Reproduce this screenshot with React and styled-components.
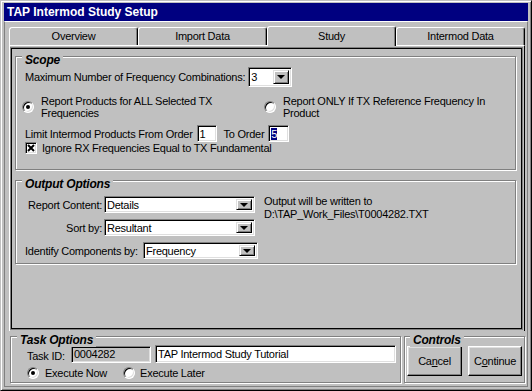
import React from 'react'
import styled, { createGlobalStyle } from 'styled-components'

const GlobalStyle = createGlobalStyle`
  html, body {
    margin: 0;
    padding: 0;
    background: #c0c0c0;
  }
  body {
    font-family: "Liberation Sans", Arial, sans-serif;
    font-size: 11px;
    letter-spacing: -0.25px;
    color: #000;
  }
`

const Window = styled.div`
  width: 532px;
  height: 391px;
  box-sizing: border-box;
  background: #c0c0c0;
  border: 1px solid;
  border-color: #c0c0c0 #000 #000 #c0c0c0;
  box-shadow: inset 1px 1px 0 #fff, inset -1px -1px 0 #808080;
  padding: 2px 3px 3px 3px;
  display: flex;
  flex-direction: column;
`

const TitleBar = styled.div`
  height: 18px;
  background: #000080;
  color: #fff;
  font-weight: bold;
  font-size: 12px;
  letter-spacing: 0;
  line-height: 18px;
  padding-left: 3px;
`

const Client = styled.div`
  flex: 1;
  display: flex;
  flex-direction: column;
  border: 1px solid #808080;
  border-top-color: #fff;
  padding: 4px 1px 1px 4px;
`

const TabStrip = styled.div`
  display: flex;
  align-items: flex-end;
  height: 19px;
  margin-right: 1px;
`

const Tab = styled.div`
  flex: 1;
  box-sizing: border-box;
  height: ${p => (p.$active ? 20 : 18)}px;
  margin-bottom: ${p => (p.$active ? -1 : 0)}px;
  background: #c0c0c0;
  border: 1px solid;
  border-bottom: none;
  border-color: #fff #000 transparent #fff;
  border-radius: 3px 3px 0 0;
  box-shadow: inset -1px 0 0 #808080;
  display: flex;
  align-items: center;
  justify-content: center;
  padding-bottom: ${p => (p.$active ? 2 : 1)}px;
  position: relative;
  z-index: ${p => (p.$active ? 1 : 0)};
`

const Panel = styled.div`
  height: 286px;
  box-sizing: border-box;
  margin-right: 1px;
  border-top: 1px solid #fff;
  border-left: 1px solid #fff;
  border-right: 1px solid #000;
  padding: 1px 1px 1px 0;
  display: flex;
`

const InnerFrame = styled.div`
  flex: 1;
  border: 1px solid #808080;
  box-shadow: inset 0 0 0 1px #000;
  padding: 8px 6px 0 4px;
  display: flex;
  flex-direction: column;
  gap: 10px;
`

const GroupBox = styled.div`
  position: relative;
  box-sizing: border-box;
  height: ${p => p.$height}px;
  border: 1px solid #808080;
  box-shadow: inset 1px 1px 0 #fff, 1px 1px 0 #fff;
  padding: ${p => p.$pad};
`

const GroupLabel = styled.div`
  position: absolute;
  top: -3px;
  left: ${p => p.$left || 6}px;
  padding: 0 3px;
  background: #c0c0c0;
  font-weight: bold;
  font-style: italic;
  font-size: 12px;
  line-height: 13px;
  letter-spacing: -0.2px;
`

const Row = styled.div`
  display: flex;
  align-items: center;
  gap: ${p => p.$gap || 0}px;
  margin-top: ${p => p.$mt || 0}px;
  margin-left: ${p => p.$ml || 0}px;
  height: ${p => (p.$h ? `${p.$h}px` : 'auto')};
`

const Field = styled.div`
  box-sizing: border-box;
  width: ${p => p.$w}px;
  height: ${p => p.$h}px;
  margin-left: ${p => p.$ml || 0}px;
  background: ${p => (p.$disabled ? '#c0c0c0' : '#fff')};
  border: 1px solid;
  border-color: #808080 #fff #fff #808080;
  box-shadow: inset 1px 1px 0 #000, inset -1px -1px 0 #dfdfdf;
  display: flex;
  align-items: center;
  padding-left: 2px;
  line-height: 12px;
  overflow: hidden;
  white-space: nowrap;
`

const SelectBox = styled(Field)`
  padding-right: 2px;
  justify-content: space-between;
`

const Highlight = styled.span`
  background: #000080;
  color: #fff;
`

const ArrowButton = styled.div`
  box-sizing: border-box;
  width: 16px;
  height: calc(100% - 4px);
  background: #c0c0c0;
  border: 1px solid;
  border-color: #dfdfdf #000 #000 #dfdfdf;
  box-shadow: inset 1px 1px 0 #fff, inset -1px -1px 0 #808080;
  display: flex;
  align-items: center;
  justify-content: center;
  &::after {
    content: '';
    border-left: 4px solid transparent;
    border-right: 4px solid transparent;
    border-top: 4px solid #000;
  }
`

const RadioCircle = styled.div`
  box-sizing: border-box;
  flex: none;
  width: 12px;
  height: 12px;
  border-radius: 50%;
  background: #fff;
  border: 1px solid;
  border-color: #808080 #fff #fff #808080;
  box-shadow: inset 1px 1px 0 #000, inset -1px -1px 0 #dfdfdf;
  display: flex;
  align-items: center;
  justify-content: center;
  &::after {
    content: '';
    width: 4px;
    height: 4px;
    border-radius: 50%;
    background: ${p => (p.$on ? '#000' : 'transparent')};
  }
`

const Option = styled.div`
  display: flex;
  align-items: center;
  gap: ${p => p.$gap || 7}px;
  width: ${p => (p.$w ? `${p.$w}px` : 'auto')};
  line-height: 12px;
`

const CheckBox = styled.div`
  box-sizing: border-box;
  width: 12px;
  height: 12px;
  background: #fff;
  border: 1px solid;
  border-color: #808080 #fff #fff #808080;
  box-shadow: inset 1px 1px 0 #000, inset -1px -1px 0 #dfdfdf;
  display: flex;
  align-items: center;
  justify-content: center;
`

const Label = styled.span`
  width: ${p => (p.$w ? `${p.$w}px` : 'auto')};
  margin-left: ${p => p.$ml || 0}px;
  margin-top: ${p => p.$mt || 0}px;
  text-align: ${p => p.$align || 'left'};
  white-space: nowrap;
`

const OutputGrid = styled.div`
  display: flex;
  gap: 5px;
`

const OutputFields = styled.div`
  display: flex;
  flex-direction: column;
  gap: 6px;
  width: 234px;
`

const OutputNote = styled.div`
  line-height: 13px;
  margin-top: -1px;
`

const Bottom = styled.div`
  flex: 1;
  display: flex;
  gap: 3px;
  padding: 5px 1px 1px 1px;
`

const TaskBox = styled(GroupBox)`
  flex: 1;
`

const ControlsBox = styled(GroupBox)`
  width: 121px;
`

const Button = styled.div`
  box-sizing: border-box;
  width: ${p => p.$w}px;
  height: 30px;
  background: #c0c0c0;
  border: 1px solid;
  border-color: #fff #000 #000 #fff;
  box-shadow: inset -1px -1px 0 #808080, inset 1px 1px 0 #dfdfdf;
  display: flex;
  align-items: center;
  justify-content: center;
`

const Radio = ({ on, children, gap, w }) => (
  <Option $gap={gap} $w={w}>
    <RadioCircle $on={on} />
    <span>{children}</span>
  </Option>
)

const Select = ({ w, h, value }) => (
  <SelectBox $w={w} $h={h}>
    <span>{value}</span>
    <ArrowButton />
  </SelectBox>
)

const tabs = ['Overview', 'Import Data', 'Study', 'Intermod Data']

export default function App() {
  return (
    <>
      <GlobalStyle />
      <Window>
        <TitleBar>TAP Intermod Study Setup</TitleBar>
        <Client>
          <TabStrip>
            {tabs.map(t => (
              <Tab key={t} $active={t === 'Study'}>
                {t}
              </Tab>
            ))}
          </TabStrip>
          <Panel>
            <InnerFrame>
              <GroupBox $height={114} $pad="10px 0 0 9px">
                <GroupLabel>Scope</GroupLabel>
                <Row $gap={3} $h={20}>
                  <Label>Maximum Number of Frequency Combinations:</Label>
                  <Select w={44} h={20} value="3" />
                </Row>
                <Row $mt={8} $ml={-3}>
                  <Radio on w={242}>
                    Report Products for ALL Selected TX
                    <br />
                    Frequencies
                  </Radio>
                  <Radio>
                    Report ONLY If TX Reference Frequency In
                    <br />
                    Product
                  </Radio>
                </Row>
                <Row $mt={6} $h={17}>
                  <Label>Limit Intermod Products From Order</Label>
                  <Field $w={20} $h={17} $ml={4}>
                    1
                  </Field>
                  <Label $ml={7}>To Order</Label>
                  <Field $w={21} $h={17} $ml={4}>
                    <Highlight>5</Highlight>
                  </Field>
                </Row>
                <Row>
                  <Option $gap={5}>
                    <CheckBox>
                      <svg width="8" height="8" viewBox="0 0 8 8">
                        <path
                          d="M1 1 L7 7 M7 1 L1 7"
                          stroke="#000"
                          strokeWidth="2"
                        />
                      </svg>
                    </CheckBox>
                    <span>Ignore RX Frequencies Equal to TX Fundamental</span>
                  </Option>
                </Row>
              </GroupBox>
              <GroupBox $height={84} $pad="15px 0 0 9px">
                <GroupLabel>Output Options</GroupLabel>
                <OutputGrid>
                  <OutputFields>
                    <Row $gap={2}>
                      <Label $w={77} $align="right">
                        Report Content:
                      </Label>
                      <Select w={151} h={17} value="Details" />
                    </Row>
                    <Row $gap={2}>
                      <Label $w={77} $align="right">
                        Sort by:
                      </Label>
                      <Select w={151} h={17} value="Resultant" />
                    </Row>
                    <Row $gap={2}>
                      <Label $w={116}>Identify Components by:</Label>
                      <Select w={115} h={17} value="Frequency" />
                    </Row>
                  </OutputFields>
                  <OutputNote>
                    Output will be written to
                    <br />
                    D:\TAP_Work_Files\T0004282.TXT
                  </OutputNote>
                </OutputGrid>
              </GroupBox>
            </InnerFrame>
          </Panel>
          <Bottom>
            <TaskBox $height={47} $pad="8px 0 0 16px">
              <GroupLabel>Task Options</GroupLabel>
              <Row>
                <Label $w={44} $mt={4}>
                  Task ID:
                </Label>
                <Field $w={80} $h={17} $disabled>
                  0004282
                </Field>
                <Field $w={241} $h={18} $ml={4}>
                  TAP Intermod Study Tutorial
                </Field>
              </Row>
              <Row $mt={4} $gap={16}>
                <Radio on gap={6}>
                  Execute Now
                </Radio>
                <Radio gap={5}>Execute Later</Radio>
              </Row>
            </TaskBox>
            <ControlsBox $height={47} $pad="9px 0 0 2px">
              <GroupLabel $left={5}>Controls</GroupLabel>
              <Row $gap={6}>
                <Button $w={55}>
                  Ca<u>n</u>cel
                </Button>
                <Button $w={54}>
                  C<u>o</u>ntinue
                </Button>
              </Row>
            </ControlsBox>
          </Bottom>
        </Client>
      </Window>
    </>
  )
}
